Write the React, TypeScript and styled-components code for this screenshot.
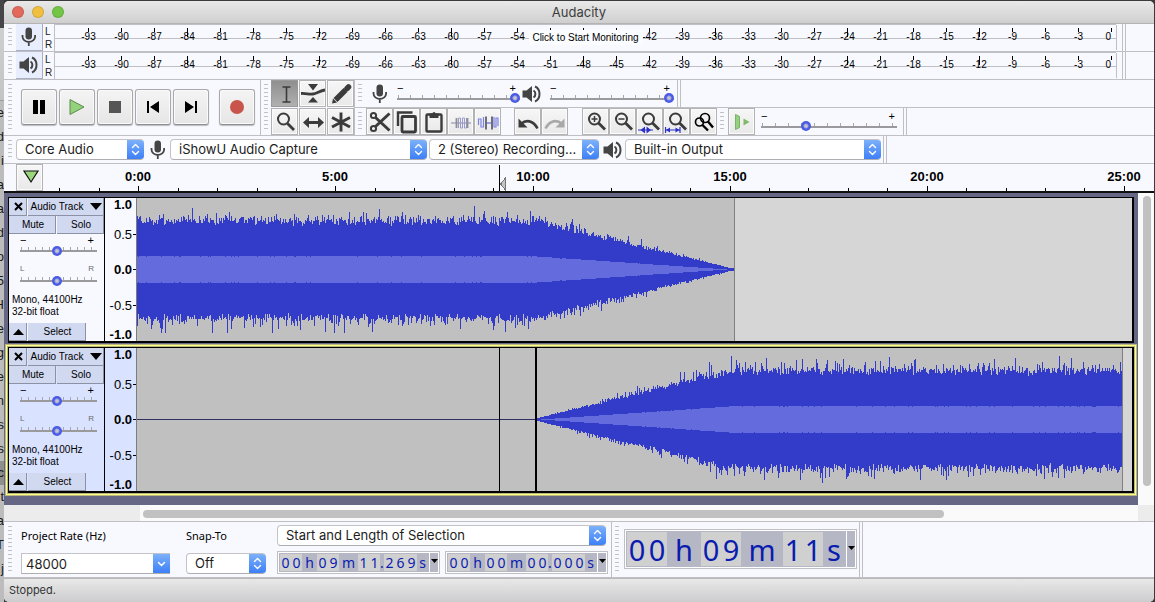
import React from 'react';
import styled, { createGlobalStyle, css } from 'styled-components';

const ui = 'Inter, "Liberation Sans", sans-serif';
const small = '"Liberation Sans", Arial, sans-serif';
const lucida = '"Noto Sans", "Open Sans", sans-serif';

const GlobalStyle = createGlobalStyle`
  * { box-sizing: border-box; }
  body { margin: 0; background: #3a3a3c; font-family: ${ui}; color: #1c1c1c; }
  button, input, select { font: inherit; color: inherit; margin: 0; padding: 0; border: 0; border-radius: 0; background: none; }
  svg { display: block; }
`;

/* ---------- shell ---------- */

const Desktop = styled.div`
  display: grid;
  grid-template-columns: 4px minmax(0, 1fr) 1px;
  min-height: 100vh;
`;

const Backdrop = styled.div`
  overflow: hidden;
  padding-top: 28px;
  background: linear-gradient(#47474a 28px, #cfcfcf 28px, #c4c4c4 100px, #bcbcbc 100px);
`;

const BackdropGap = styled.div`
  height: 73px;
  border-bottom: 1px solid #9c9c9c;
`;

const BackdropLine = styled.div<{ $dark?: boolean }>`
  display: flex;
  justify-content: flex-end;
  width: 4px;
  height: 24px;
  font: 13px/24px ${small};
  color: #1a1a1a;
  background: ${p => (p.$dark ? '#8f8f8f' : 'transparent')};
`;

const Frame = styled.div`
  display: flex;
  flex-direction: column;
  margin-top: 1px;
  border-radius: 5px;
  overflow: hidden;
  background: #f8f9ff;
`;

const TitleBar = styled.header`
  display: grid;
  grid-template-columns: 1fr auto 1fr;
  align-items: center;
  height: 23px;
  padding: 0 8px;
  background: linear-gradient(#e9e9e9, #cfcfcf);
  border-bottom: 1px solid #b4b4b4;
`;

const Lights = styled.div`
  display: flex;
  gap: 8px;
`;

const Light = styled.button<{ $color: string }>`
  width: 12px;
  height: 12px;
  border-radius: 50%;
  background: ${p => p.$color};
  border: 1px solid rgba(0, 0, 0, 0.12);
`;

const Title = styled.h1`
  margin: 0;
  font: 13px/20px ${ui};
  color: #3c3c3c;
`;

const Bar = styled.div<{ $height: number }>`
  display: flex;
  align-items: center;
  height: ${p => p.$height}px;
  padding-left: 4px;
  border-bottom: 1px solid #bfbfc4;
`;

const Grip = styled.span<{ $margin?: number }>`
  flex: none;
  align-self: stretch;
  width: 4px;
  margin: 4px ${p => p.$margin ?? 4}px 3px 0;
  background: repeating-linear-gradient(#c2c2c4 0 1px, transparent 1px 4px);
`;

const BarEnd = styled.span`
  flex: none;
  align-self: stretch;
  width: 4px;
  border-left: 1px solid #bfbfc4;
  border-right: 1px solid #bfbfc4;
`;

const Space = styled.span<{ $w: number }>`
  flex: none;
  width: ${p => p.$w}px;
`;

/* ---------- meters ---------- */

const MeterButton = styled.button`
  display: grid;
  place-items: center;
  flex: none;
  width: 27px;
  height: 27px;
  background: #e9eeff;
  border-right: 1px solid #a9aec6;
  border-bottom: 1px solid #a9aec6;
`;

const Channels = styled.span`
  display: flex;
  flex-direction: column;
  flex: none;
  width: 11px;
  padding-left: 2px;
  font: 10px/13px ${small};
`;

const Scale = styled.div`
  position: relative;
  display: flex;
  flex: 1;
  min-width: 0;
  height: 27px;
  padding: 4px 4px 0 17px;
  border-left: 1px solid #bfbfc4;
  background:
    linear-gradient(#bfbfc4, #bfbfc4) 0 0 / 100% 1px no-repeat,
    linear-gradient(#bfbfc4, #bfbfc4) 0 14px / 100% 1px no-repeat;
`;

const Db = styled.span<{ $tall?: boolean; $last?: boolean }>`
  flex: ${p => (p.$last ? '0 0 17px' : '1 1 0')};
  min-width: 0;
  height: 18px;
  padding-top: 2px;
  font: 10px/14px ${small};
  color: #000;
  text-align: ${p => (p.$last ? 'right' : 'center')};
  padding-right: ${p => (p.$last ? 1 : 0)}px;
  background: linear-gradient(#000, #000) ${p => (p.$last ? '100%' : '50%')} 0 / 1px ${p => (p.$tall ? 9 : 4)}px no-repeat;
`;

const MonitorPrompt = styled.button`
  position: absolute;
  top: 6px;
  left: 50%;
  transform: translateX(-50%);
  padding: 0 4px;
  font: 10px/15px ${small};
  color: #000;
  white-space: nowrap;
  background: #fbfcff;
`;

const MeterEdge = styled.span`
  flex: none;
  width: 3px;
  height: 25px;
  margin-right: 3px;
  border-left: 1px solid #bfbfc4;
`;

/* ---------- buttons ---------- */

const TransportButton = styled.button`
  display: grid;
  place-items: center;
  flex: none;
  width: 36px;
  height: 36px;
  border: 1px solid #a9a9ab;
  border-bottom-color: #8f8f92;
  border-radius: 3px;
  background: linear-gradient(#f4f4f4, #e6e6e6);
  box-shadow: 0 1px 1px rgba(0, 0, 0, 0.25), inset 0 0 0 1px #fafafa;
`;

const TransportGroup = styled.div`
  display: flex;
  align-items: center;
  gap: 2px;
  padding: 0 5px 2px 5px;
  height: 100%;
  border-right: 1px solid #bfbfc4;
`;

const ToolGrid = styled.div`
  display: grid;
  grid-template-columns: repeat(3, 27px);
  gap: 1px;
  border-right: 1px solid #bfbfc4;
`;

const Tool = styled.button<{ $down?: boolean }>`
  display: grid;
  place-items: center;
  flex: none;
  width: 27px;
  height: 27px;
  border: 1px solid #b3b3b5;
  background: linear-gradient(#f6f6f6, #e9e9e9);
  box-shadow: inset 0 0 0 1px #fbfbfb;
  ${p => p.$down && css`
    border-color: #9a9a9a;
    background: linear-gradient(#8f8f8f, #b0b0b0);
    box-shadow: none;
  `}
`;

const Strips = styled.div`
  display: flex;
  flex-direction: column;
  flex: 1;
  min-width: 0;
`;

const Strip = styled.div<{ $line?: boolean }>`
  display: flex;
  align-items: center;
  height: ${p => (p.$line ? 28 : 27)}px;
  padding-left: 3px;
  border-bottom: ${p => (p.$line ? '1px solid #bfbfc4' : '0')};
`;

/* ---------- sliders ---------- */

const SliderBox = styled.label<{ $w: number }>`
  display: flex;
  flex-direction: column;
  flex: none;
  width: ${p => p.$w}px;
`;

const Ends = styled.span<{ $grey?: boolean; $inset?: number }>`
  display: flex;
  justify-content: space-between;
  padding: 0 ${p => p.$inset ?? 2}px 0 0;
  height: ${p => (p.$grey ? 11 : 9)}px;
  font: ${p => (p.$grey ? '8px' : '11px')}/9px ${small};
  color: ${p => (p.$grey ? '#6b6b6b' : '#000')};
`;

const Range = styled.input<{ $step: number }>`
  appearance: none;
  width: 100%;
  height: 11px;
  background:
    linear-gradient(#9a9a9c, #9a9a9c) 0 5px / 100% 2px no-repeat,
    repeating-linear-gradient(90deg, transparent 0 1px, #a8a8aa 1px 2px, transparent 2px ${p => p.$step}px) 0 2px / 100% 3px no-repeat;
  &::-webkit-slider-thumb {
    appearance: none;
    width: 10px;
    height: 10px;
    border-radius: 50%;
    background: radial-gradient(#c6c6cc 0 1px, #9aa0d8 2px, #4a5be6 3px);
  }
`;

function Slider(p: { name: string; w: number; value: number; step: number; left?: string; right?: string; grey?: boolean; inset?: number }) {
  return (
    <SliderBox $w={p.w}>
      <Ends $grey={p.grey} $inset={p.inset}><span>{p.left ?? '−'}</span><span>{p.right ?? '+'}</span></Ends>
      <Range type="range" aria-label={p.name} min={0} max={100} defaultValue={p.value} $step={p.step} />
    </SliderBox>
  );
}

/* ---------- drop-downs ---------- */

const SelectBox = styled.span<{ $w: number; $square?: boolean }>`
  display: grid;
  grid-template-columns: minmax(0, 1fr) 17px;
  flex: none;
  width: ${p => p.$w}px;
  height: 21px;
  overflow: hidden;
  border: 1px solid #c4c4c8;
  border-right: 0;
  border-bottom-color: #adadb2;
  border-radius: ${p => (p.$square ? '0' : '4px')};
  background: #fff;
`;

const SelectField = styled.select`
  appearance: none;
  grid-area: 1 / 1 / 2 / 3;
  width: 100%;
  padding: 0 20px 0 8px;
  font: 13px/19px ${ui};
  text-overflow: ellipsis;
`;

const RateField = styled.input`
  width: 100%;
  min-width: 0;
  padding: 2px 4px 0;
  font: 13px/17px ${ui};
`;

const Stepper = styled.span`
  grid-area: 1 / 2;
  display: grid;
  place-items: center;
  margin: -1px 0;
  background: linear-gradient(#7fb3fa, #3a7df7);
  pointer-events: none;
`;

const Select = ({ name, text, w }: { name: string; text: string; w: number }) => (
  <SelectBox $w={w}>
    <SelectField aria-label={name}><option>{text}</option></SelectField>
    <Stepper>
      <svg width="9" height="13" viewBox="0 0 9 13" fill="none" stroke="#fff" strokeWidth="1.4" strokeLinecap="round" strokeLinejoin="round">
        <path d="M1.5 4.5l3-3 3 3M1.5 8.5l3 3 3-3" />
      </svg>
    </Stepper>
  </SelectBox>
);

/* ---------- ruler ---------- */

const RulerRow = styled.div`
  display: flex;
  height: 29px;
  padding-left: 12px;
  border-bottom: 2px solid #101010;
`;

const RulerScale = styled.svg`
  flex: 1;
  min-width: 0;
  height: 27px;
  overflow: hidden;
  font: bold 13px ${small};
`;

/* ---------- tracks ---------- */

const Workspace = styled.main`
  display: grid;
  grid-template-columns: minmax(0, 1fr) 16px;
  grid-template-rows: 1fr 16px;
  flex: 1;
`;

const Tracks = styled.section`
  display: flex;
  flex-direction: column;
  gap: 4px;
  padding: 4px 4px 12px;
  background: #666785;
`;

const VScroll = styled.div`
  padding: 3px 3px 19px 5px;
  background: #fafafa;
`;

const HScroll = styled.div`
  padding: 5px 0 3px 3px;
  margin-left: 136px;
  background: #fafafa;
`;

const Corner = styled.div`
  background: #ececec;
`;

const HRow = styled.div`
  background: #ececec;
`;

const Thumb = styled.div<{ $flat?: boolean }>`
  width: ${p => (p.$flat ? '80.500%' : '100%')};
  height: ${p => (p.$flat ? '8px' : '100%')};
  border-radius: 4px;
  background: #c1c1c1;
`;

const TrackRow = styled.article<{ $selected?: boolean }>`
  display: grid;
  grid-template-columns: 96px 32px minmax(0, 1fr);
  height: 146px;
  border: solid #000;
  border-width: 1px 2px 2px 1px;
  background: ${p => (p.$selected ? '#d9e2ff' : '#f8f9ff')};
  box-shadow: ${p => (p.$selected ? '0 0 0 1px #b9b77c, 0 0 0 2px #ffff8a, 0 0 0 3px #b9b77c' : 'none')};
`;

const TrackPanel = styled.div`
  display: flex;
  flex-direction: column;
  height: 143px;
  border-right: 1px solid #000;
`;

const PanelButtons = styled.div<{ $columns: string }>`
  display: grid;
  grid-template-columns: ${p => p.$columns};
  gap: 1px;
  height: 18px;
`;

const PanelButton = styled.button`
  display: flex;
  align-items: center;
  justify-content: center;
  gap: 7px;
  padding-left: 2px;
  font: 10px/16px ${small};
  color: #000;
  white-space: nowrap;
  background: #d1d9f1;
  border-right: 1px solid #8c92a6;
  border-bottom: 1px solid #8c92a6;
`;

const PanelSliders = styled.div`
  display: flex;
  flex-direction: column;
  gap: 8px;
  padding: 2px 0 0 11px;
`;

const Format = styled.p`
  flex: 1;
  margin: 0;
  padding: 8px 0 0 3px;
  font: 10px/12px ${small};
  color: #000;
`;

const Levels = styled.div`
  display: grid;
  grid-template-rows: 13px 46px 25px 46px 12px;
  align-items: center;
  height: 143px;
  border-right: 1px solid #7d7d7d;
  font: 13px/13px ${small};
  color: #000;
`;

const Level = styled.span<{ $bold?: boolean; $tick?: boolean }>`
  padding-right: 4px;
  text-align: right;
  font-weight: ${p => (p.$bold ? 700 : 400)};
  background: ${p => (p.$tick ? 'linear-gradient(#000, #000) 100% 50% / 3px 1px no-repeat' : 'none')};
`;

const Wave = styled.svg`
  width: 100%;
  height: 143px;
  background: #d6d6d6;
`;

function noise(seed: number) {
  let s = seed;
  return () => {
    s = (s * 1664525 + 1013904223) % 4294967296;
    return s / 4294967296;
  };
}

const MID = 71.5;

/* One vertical bar per pixel column, scaled by the fade envelope. */
function buildWave(from: number, to: number, seed: number, gain: (x: number) => number) {
  const rnd = noise(seed);
  const peak = () => Math.min(63, 43 + rnd() * 6 + -Math.log(1 - rnd()) * 3.6);
  let outer = '';
  let inner = '';
  for (let x = from; x < to; x++) {
    const g = gain(x);
    const up = Math.max(1, Math.round(peak() * g));
    const down = Math.max(1, Math.round(peak() * g));
    const rms = Math.round((rnd() > 0.9 ? 13 : 13.5) * g);
    outer += `M${x} ${71 - up}h1V${72 + down}h-1z`;
    if (rms > 0) inner += `M${x} ${72 - rms}h1V${71 + rms}h-1z`;
  }
  return { outer, inner };
}

const fadeOut = buildWave(0, 597, 7, x => (x < 400 ? 1 : Math.max(0, (597 - x) / 197)));
const fadeIn = buildWave(400, 985, 91, x => (x > 592 ? 1 : (x - 396) / 196));

type WaveKind = 'out' | 'in';

function Waveform({ kind }: { kind: WaveKind }) {
  const w = kind === 'out' ? fadeOut : fadeIn;
  const end = kind === 'out' ? 597 : 985;
  return (
    <Wave role="img" aria-label="Waveform" shapeRendering="crispEdges">
      <rect width={end} height="143" fill="#c0c0c0" />
      <rect x={end} width="1" height="143" fill="#7f7f7f" />
      {kind === 'in' && <rect y={MID - 0.5} width="399" height="1" fill="#2f2f62" />}
      <path d={w.outer} fill="#323cc8" />
      <path d={w.inner} fill="#646bdc" />
      {kind === 'in' && <rect x="362" width="1" height="143" />}
      {kind === 'in' && <rect x="398" width="2" height="143" />}
    </Wave>
  );
}

function Track({ kind, selected }: { kind: WaveKind; selected?: boolean }) {
  return (
    <TrackRow $selected={selected}>
      <TrackPanel>
        <PanelButtons $columns="18px 1fr">
          <PanelButton aria-label="Close track">
            <svg width="9" height="9" viewBox="0 0 9 9" stroke="#000" strokeWidth="2"><path d="M1 1l7 7M8 1L1 8" /></svg>
          </PanelButton>
          <PanelButton>
            Audio Track
            <svg width="12" height="7" viewBox="0 0 12 7"><path d="M0 0h12L6 7z" /></svg>
          </PanelButton>
        </PanelButtons>
        <PanelButtons $columns="1fr 1fr">
          <PanelButton>Mute</PanelButton>
          <PanelButton>Solo</PanelButton>
        </PanelButtons>
        <PanelSliders>
          <Slider name="Gain" w={77} value={48} step={7} inset={3} />
          <Slider name="Pan" w={77} value={48} step={7} inset={3} left="L" right="R" grey />
        </PanelSliders>
        <Format>Mono, 44100Hz<br />32-bit float</Format>
        <PanelButtons $columns="18px 58px">
          <PanelButton aria-label="Collapse">
            <svg width="11" height="6" viewBox="0 0 11 6"><path d="M0 6h11L5.500 0z" /></svg>
          </PanelButton>
          <PanelButton>Select</PanelButton>
        </PanelButtons>
      </TrackPanel>
      <Levels>
        <Level $bold>1.0</Level>
        <Level $tick>0.5</Level>
        <Level $bold $tick>0.0</Level>
        <Level $tick>-0.5</Level>
        <Level $bold>-1.0</Level>
      </Levels>
      <Waveform kind={kind} />
    </TrackRow>
  );
}

/* ---------- selection bar ---------- */

const SelectionBar = styled.div`
  display: flex;
  height: 57px;
  padding-left: 4px;
  border-top: 1px solid #bfbfc4;
  border-bottom: 1px solid #bfbfc4;
`;

const Field = styled.div<{ $w: number }>`
  display: flex;
  flex-direction: column;
  flex: none;
  width: ${p => p.$w}px;
  gap: 9px;
  padding-top: 6px;
`;

const FieldLabel = styled.label`
  font: 11px/16px ${lucida};
  color: #000;
`;

const RangeFields = styled.div`
  display: flex;
  flex-direction: column;
  gap: 5px;
  width: 335px;
  padding-top: 3px;
  border-right: 1px solid #bfbfc4;
`;

const Times = styled.div`
  display: flex;
  gap: 5px;
`;

const TimeBox = styled.div<{ $big?: boolean }>`
  display: flex;
  flex: none;
  height: ${p => (p.$big ? 40 : 23)}px;
  padding: 1px;
  border: 1px solid #bfbfc4;
  background: #fff;
  font: ${p => (p.$big ? '29px/35px' : '14px/18px')} ${lucida};
  color: #0a1cb0;
`;

const TimeCells = styled.span`
  display: flex;
  padding: 1px;
  background: #b5b7c4;
`;

const Cell = styled.span<{ $w: number; $digit?: boolean }>`
  width: ${p => p.$w}px;
  text-align: center;
  background: ${p => (p.$digit ? '#d0d0d0' : 'transparent')};
`;

const TimeMenu = styled.button<{ $big?: boolean }>`
  display: grid;
  place-items: center;
  width: 9px;
  padding-bottom: ${p => (p.$big ? 2 : 4)}px;
  border-left: 1px solid #fff;
  background: #b5b7c4;
`;

function TimeControl({ text, big }: { text: string; big?: boolean }) {
  const widths: Record<string, number> = big ? { h: 34, m: 42, s: 22 } : { h: 15, m: 19, s: 11, '.': 4 };
  return (
    <TimeBox $big={big} role="group" aria-label="Time">
      <TimeCells>
        {text.split('').map((c, i) => (
          <Cell key={i} $w={widths[c] ?? (big ? 20 : 11)} $digit={/\d/.test(c)}>{c}</Cell>
        ))}
      </TimeCells>
      <TimeMenu $big={big} aria-label="Time format">
        <svg width="7" height="4" viewBox="0 0 7 4"><path d="M0 0h7L3.500 4z" /></svg>
      </TimeMenu>
    </TimeBox>
  );
}

const BigTime = styled.div`
  display: flex;
  align-items: center;
  padding: 0 2px 2px 4px;
`;

const Status = styled.footer`
  height: 24px;
  padding: 0 5px;
  font: 11px/22px ${ui};
  color: #333;
  border-top: 1px solid #b9b9b9;
  background: linear-gradient(#e8e8e8, #cdcdcf);
`;

/* ---------- icons ---------- */

const Mic = () => (
  <svg width="20" height="20" viewBox="0 0 20 20" fill="none" stroke="#444" strokeWidth="1.8">
    <rect x="6.500" y="0.500" width="6.500" height="12" rx="3.200" fill="#444" stroke="none" />
    <path d="M3.500 8v1.500a6.300 5.500 0 0 0 12.600 0V8M9.800 15v4" />
  </svg>
);

const Speaker = () => (
  <svg width="20" height="20" viewBox="0 0 20 20" fill="none" stroke="#444" strokeWidth="2">
    <path d="M0.500 6.500h4L10 2v16l-5.500-4.500h-4z" fill="#444" stroke="none" />
    <path d="M11.500 6.500c2.500 1.500 2.500 5.500 0 7M13 2.500c6 2.500 6 12.500 0 15" />
  </svg>
);

const Svg = styled.svg.attrs({ width: 26, height: 26, viewBox: '0 0 26 26', fill: 'none', stroke: '#3b3b3b', strokeWidth: 2 })`
  margin: -1px;
`;

const toolIcons: { name: string; down?: boolean; icon: React.ReactNode }[] = [
  { name: 'Selection tool', down: true, icon: <path d="M10.500 6h8M10.500 21h8M14.500 6v15" strokeWidth="1.600" /> },
  {
    name: 'Envelope tool',
    icon: <><path d="M8 3h10l-5 6.500zM8 21.500h10L13 16z" fill="#3b3b3b" stroke="none" /><path d="M1 12.500c5-.3 8 1 12 .5s7-3.500 12-4" strokeWidth="2.800" /></>,
  },
  { name: 'Draw tool', icon: <><path d="M7.500 19L17.500 9" strokeWidth="5.500" /><path d="M19 7.500l1.500-1.500" strokeWidth="5.500" strokeLinecap="round" /><path d="M4 22.500l1-5 4 4z" fill="#3b3b3b" stroke="none" /></> },
  { name: 'Zoom tool', icon: <><circle cx="11.500" cy="10" r="5.500" strokeWidth="2" /><path d="M15.500 14.500l6.500 6.500" strokeWidth="2.800" /></> },
  { name: 'Time shift tool', icon: <><path d="M6 13.500h15" strokeWidth="2.800" /><path d="M3 13.500l6-5.500v11zM24 13.500L18 8v11z" fill="#3b3b3b" stroke="none" /></> },
  { name: 'Multi-tool', icon: <path d="M13 3.500v19M4 8.500l18 9.500M22 8.500L4 18" strokeWidth="2.900" /> },
];

const lens = <><circle cx="11.500" cy="10" r="5.500" strokeWidth="2" /><path d="M15.500 14l6.500 6.500" strokeWidth="2.800" /></>;

const editIcons = [
  { name: 'Cut', icon: <><circle cx="6.500" cy="6.500" r="2.600" /><circle cx="6.500" cy="19.500" r="2.600" /><path d="M8.500 8.500l14 13M8.500 17.500l14-13" strokeWidth="3" /></> },
  { name: 'Copy', icon: <><path d="M4 17V3.500h14.500" strokeWidth="2.400" /><rect x="8" y="7.500" width="13.500" height="15.500" rx="1" strokeWidth="2.800" /></> },
  { name: 'Paste', icon: <><rect x="5.500" y="5.500" width="15" height="17" rx="1" strokeWidth="2.400" /><path d="M8.500 9V4.500h3a1.500 1.500 0 0 1 3 0h3V9z" fill="#3b3b3b" stroke="none" /></> },
  { name: 'Trim', icon: <><path d="M3 14h20" stroke="#a9aac4" strokeWidth="1.300" /><path d="M10.500 19V9h2v10h2V9h2v10h2V9" stroke="#9c9ccc" strokeWidth="1" /><path d="M8.500 9v10M19.500 9v10" stroke="#8d8d96" strokeWidth="1.800" /></> },
  { name: 'Silence', icon: <><path d="M3.500 16V10h2.500v8h2.500V8M19 8v10h2V9h2v8" stroke="#7c82e2" strokeWidth="1.200" /><path d="M11 14h6" stroke="#7c82e2" strokeWidth="1.600" /><path d="M11 7.500v13M17 7.500v13" stroke="#6e6e78" strokeWidth="2" /></> },
];

const undo = (color: string, flip?: boolean) => (
  <g transform={flip ? 'matrix(-1 0 0 1 26 0)' : undefined}>
    <path d="M6 15c5-4.500 12-4 16.500 4.500" stroke={color} strokeWidth="2.600" />
    <path d="M3.500 9.500v9h9z" fill={color} stroke="none" />
  </g>
);

const zoomIcons = [
  { name: 'Zoom in', icon: <>{lens}<path d="M8.500 10h6M11.500 7v6" strokeWidth="1.500" /></> },
  { name: 'Zoom out', icon: <>{lens}<path d="M8.500 10h6" strokeWidth="1.500" /></> },
  { name: 'Fit selection', icon: <>{lens}<path d="M1 21h15" stroke="#2a30c8" strokeWidth="1.200" /><path d="M8 17.500v7L3.500 21zM9.500 17.500v7L14 21z" fill="#2a30c8" stroke="none" /></> },
  { name: 'Fit project', icon: <>{lens}<path d="M1.500 18v6M16 18v6M2 21h14" stroke="#2a30c8" strokeWidth="1.200" /><path d="M6 18.500L2 21l4 2.500zM11.500 18.500l4 2.500-4 2.500z" fill="#2a30c8" stroke="none" /></> },
  { name: 'Zoom toggle', icon: <g stroke="#000" strokeWidth="1.700"><circle cx="14" cy="9" r="4.500" /><circle cx="8.500" cy="13" r="4" /><path d="M17 12.500l5 6M11.500 16l5.500 5.500" strokeWidth="2.400" /></g> },
];

const DB = Array.from({ length: 31 }, (_, i) => -93 + i * 3);

function Meter({ name, icon, prompt }: { name: string; icon: React.ReactNode; prompt?: boolean }) {
  return (
    <Bar $height={28}>
      <Grip />
      <MeterButton aria-label={name}>{icon}</MeterButton>
      <Channels><span>L</span><span>R</span></Channels>
      <Scale>
        {DB.map(v => <Db key={v} $tall={v % 12 === 0}>{prompt && v >= -51 && v <= -45 ? '' : v}</Db>)}
        <Db $last>0</Db>
        {prompt && <MonitorPrompt>Click to Start Monitoring</MonitorPrompt>}
      </Scale>
      <MeterEdge />
      <BarEnd />
      <Space $w={28} />
    </Bar>
  );
}

const LETTERS = ['e', 'd', 'i', 'a', 'a', 'd', 'o', '5', 'H', 'e', 'g', 'e', 'n', 's', 's', 'c', 't', 'a', 'T', 'j'];

const START = 95.3;
const MINUTE = 39.42;

export default function App() {
  return (
    <>
      <GlobalStyle />
      <Desktop>
        <Backdrop aria-hidden="true">
          <BackdropGap />
          {LETTERS.map((c, i) => <BackdropLine key={i} $dark={i === 15}>{c}</BackdropLine>)}
        </Backdrop>
        <Frame>
          <TitleBar>
            <Lights>
              <Light $color="#e2695c" aria-label="Close" />
              <Light $color="#f0bf3f" aria-label="Minimize" />
              <Light $color="#72c545" aria-label="Zoom" />
            </Lights>
            <Title>Audacity</Title>
            <span />
          </TitleBar>

          <Meter name="Record meter" icon={<Mic />} prompt />
          <Meter name="Playback meter" icon={<Speaker />} />

          <Bar $height={56}>
            <Grip />
            <TransportGroup>
              <TransportButton aria-label="Pause"><svg width="14" height="16"><path d="M1 1h5v14H1zM8 1h5v14H8z" /></svg></TransportButton>
              <TransportButton aria-label="Play"><svg width="18" height="18"><path d="M2 1.500v15L16 9z" fill="#93d27a" stroke="#5c8a4c" /></svg></TransportButton>
              <TransportButton aria-label="Stop"><svg width="12" height="12"><path d="M0 0h12v12H0z" fill="#555" /></svg></TransportButton>
              <TransportButton aria-label="Skip to start"><svg width="14" height="14"><path d="M1 1h2v12H1zM13 1v12L4 7z" /></svg></TransportButton>
              <TransportButton aria-label="Skip to end"><svg width="14" height="14"><path d="M11 1h2v12h-2zM1 1v12l9-6z" /></svg></TransportButton>
              <Space $w={6} />
              <TransportButton aria-label="Record"><svg width="14" height="14"><circle cx="7" cy="7" r="7" fill="#c9544b" /></svg></TransportButton>
            </TransportGroup>
            <Space $w={3} />
            <Grip $margin={3} />
            <ToolGrid>
              {toolIcons.map(t => <Tool key={t.name} aria-label={t.name} $down={t.down}><Svg>{t.icon}</Svg></Tool>)}
            </ToolGrid>
            <Strips>
              <Strip $line>
                <Grip $margin={8} />
                <Mic />
                <Space $w={7} />
                <Slider name="Recording volume" w={123} value={100} step={12} inset={4} />
                <Space $w={2} />
                <Speaker />
                <Space $w={8} />
                <Slider name="Playback volume" w={124} value={100} step={12} inset={4} />
                <Space $w={3} />
                <BarEnd />
              </Strip>
              <Strip>
                <Grip />
                {editIcons.map(t => <Tool key={t.name} aria-label={t.name}><Svg>{t.icon}</Svg></Tool>)}
                <Space $w={13} />
                <Tool aria-label="Undo"><Svg>{undo('#3b3b3b')}</Svg></Tool>
                <Tool aria-label="Redo"><Svg>{undo('#a8a8a8', true)}</Svg></Tool>
                <Space $w={14} />
                {zoomIcons.map(t => <Tool key={t.name} aria-label={t.name}><Svg>{t.icon}</Svg></Tool>)}
                <Space $w={3} />
                <Grip />
                <Tool aria-label="Play at speed">
                  <Svg><path d="M6.500 5.500l4 2v11l-4 2z" fill="#93d27a" stroke="#7fae6e" strokeWidth="1" /><path d="M14.500 9.500v7l6-3.500z" fill="#7fb868" stroke="none" /></Svg>
                </Tool>
                <Space $w={6} />
                <Slider name="Playback speed" w={136} value={32} step={13} inset={2} />
                <Space $w={6} />
                <BarEnd />
              </Strip>
            </Strips>
          </Bar>

          <Bar $height={28}>
            <Grip />
            <Select name="Audio host" text="Core Audio" w={128} />
            <Space $w={4} />
            <Mic />
            <Space $w={2} />
            <Select name="Recording device" text="iShowU Audio Capture" w={257} />
            <Space $w={2} />
            <Select name="Recording channels" text="2 (Stereo) Recording..." w={170} />
            <Space $w={4} />
            <Speaker />
            <Space $w={2} />
            <Select name="Playback device" text="Built-in Output" w={256} />
            <Space $w={2} />
            <BarEnd />
          </Bar>

          <RulerRow>
            <Tool aria-label="Pinned play head">
              <Svg><path d="M7 6h14l-7 11z" fill="#9ad67c" stroke="#111" strokeWidth="1.200" /></Svg>
            </Tool>
            <RulerScale aria-label="Timeline" shapeRendering="crispEdges">
              {Array.from({ length: 40 }, (_, i) => i - 2).map(m => {
                const x = Math.round(START + m * MINUTE);
                const major = m % 5 === 0;
                return (
                  <g key={m}>
                    <rect x={x} y={major ? 22 : 24} width="1" height="5" />
                    {major && m >= 0 && <text x={x} y="17" textAnchor="middle">{m}:00</text>}
                  </g>
                );
              })}
              <rect x="456" y="1" width="1" height="26" />
              <path d="M462.500 14v12l-5-6z" fill="#c4c4c4" stroke="#777" />
            </RulerScale>
          </RulerRow>

          <Workspace>
            <Tracks>
              <Track kind="out" />
              <Track kind="in" selected />
            </Tracks>
            <VScroll><Thumb /></VScroll>
            <HRow><HScroll><Thumb $flat /></HScroll></HRow>
            <Corner />
          </Workspace>

          <SelectionBar>
            <Grip $margin={9} />
            <Field $w={165}>
              <FieldLabel htmlFor="rate">Project Rate (Hz)</FieldLabel>
              <SelectBox $w={149} $square>
                <RateField id="rate" defaultValue="48000" />
                <Stepper>
                  <svg width="9" height="6" viewBox="0 0 9 6" fill="none" stroke="#fff" strokeWidth="1.500" strokeLinecap="round"><path d="M1.500 1.500l3 3 3-3" /></svg>
                </Stepper>
              </SelectBox>
            </Field>
            <Field $w={91}>
              <FieldLabel>Snap-To</FieldLabel>
              <Select name="Snap-To" text="Off" w={80} />
            </Field>
            <RangeFields>
              <Select name="Selection mode" text="Start and Length of Selection" w={329} />
              <Times>
                <TimeControl text="00h09m11.269s" />
                <TimeControl text="00h00m00.000s" />
              </Times>
            </RangeFields>
            <Space $w={3} />
            <Grip $margin={1} />
            <BigTime><TimeControl text="00h09m11s" big /></BigTime>
            <BarEnd />
          </SelectionBar>
          <Status>Stopped.</Status>
        </Frame>
      </Desktop>
    </>
  );
}
